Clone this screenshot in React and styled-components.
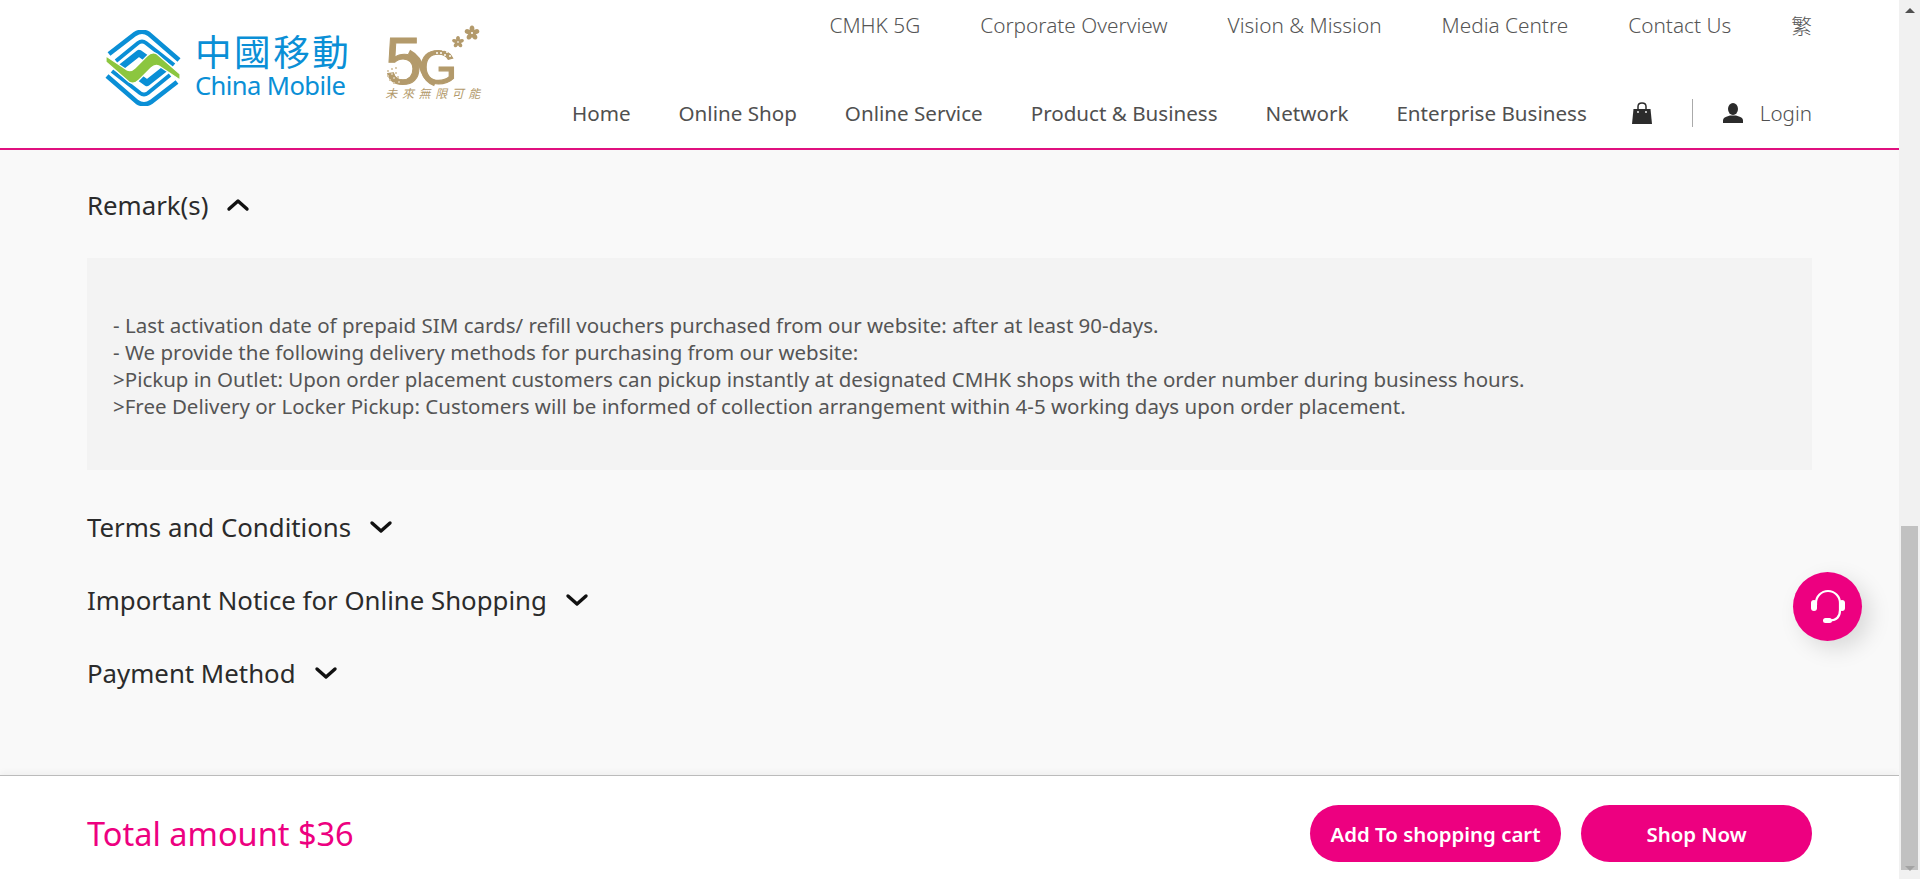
import React from 'react';
import styled, { createGlobalStyle } from 'styled-components'

const pink = '#ed0080'
const gold = '#b39a6b'
const font = `"Noto Sans", "Noto Sans CJK TC", sans-serif`

const Global = createGlobalStyle`
html, body { margin:0; padding:0; height:100%; overflow:hidden; background:#fff; }
* { box-sizing:border-box; }
`

const Shell = styled.div`
position:relative;
display:grid;
grid-template-columns:1fr 21px;
width:100%;
height:879px;
overflow:hidden;
font-family:${font};
`

const Page = styled.div`
display:flex;
flex-direction:column;
min-width:0;
height:879px;
`

const Header = styled.header`
flex:none;
height:150px;
display:flex;
justify-content:space-between;
background:#fff;
border-bottom:2px solid #e0107f;
padding:0 87px 0 105px;
`

const LogoBox = styled.div`
display:flex;
align-items:flex-start;
padding-top:30px;
`

const LogoWords = styled.div`
display:flex;
flex-direction:column;
margin-left:14px;
color:#0a8fd6;
`

const LogoCn = styled.div`
font-family:"Noto Sans CJK TC", sans-serif;
font-size:36.6px;
line-height:42px;
letter-spacing:2.5px;
white-space:nowrap;
`

const LogoEn = styled.div`
font-size:25.6px;
line-height:27px;
letter-spacing:-.6px;
white-space:nowrap;
`

const FiveG = styled.div`
display:flex;
flex-direction:column;
margin-left:34px;
margin-top:-5px;
`

const FiveGCaption = styled.div`
font-family:"Noto Sans CJK TC", sans-serif;
font-size:12px;
line-height:15px;
letter-spacing:4.6px;
font-style:italic;
color:${gold};
white-space:nowrap;
margin-top:-14px;
`

const NavColumn = styled.div`
display:flex;
flex-direction:column;
align-items:flex-end;
`

const TopNav = styled.nav`
display:flex;
align-items:center;
gap:60px;
height:50px;
font-size:20.8px;
font-weight:300;
color:#555;
`

const MainNav = styled.nav`
display:flex;
align-items:center;
gap:48px;
height:50px;
margin-top:38px;
font-size:20.6px;
color:#505050;
`

const NavLink = styled.a`
white-space:nowrap;
cursor:pointer;
`

const BagSlot = styled.div`
display:flex;
margin-left:-3px;
`

const UserBox = styled.div`
display:flex;
align-items:center;
height:28px;
padding-left:30px;
border-left:1px solid #aaa;
margin-left:-8px;
gap:17px;
font-weight:300;
`

const Content = styled.main`
flex:1;
min-height:0;
background:#f9f9f9;
padding:38px 87px 0;
`

const AccordionTitle = styled.div`
display:flex;
align-items:center;
gap:18px;
height:34px;
margin-bottom:${(props) => props.open ? '36px' : '39px'};
font-size:25.8px;
color:#2b2b2b;
cursor:pointer;
`

const RemarkPanel = styled.div`
background:#f3f3f3;
padding:54px 26px 50px;
margin-bottom:40px;
font-size:20.5px;
line-height:27px;
color:#555;
`

const Footer = styled.footer`
flex:none;
height:104px;
display:flex;
align-items:center;
justify-content:space-between;
background:#fff;
border-top:1px solid #bbb;
box-shadow:0 -3px 6px rgba(0,0,0,.04);
padding:12px 87px 0;
`

const Total = styled.div`
font-size:32.5px;
color:${pink};
`

const Actions = styled.div`
display:flex;
gap:20px;
`

const CartButton = styled.button`
width:${(props) => props.wide ? '251px' : '231px'};
height:57px;
border:none;
border-radius:29px;
background:${pink};
color:#fff;
font-family:${font};
font-size:20.4px;
font-weight:600;
cursor:pointer;
`

const Fab = styled.div`
position:absolute;
left:1793px;
top:572px;
width:69px;
height:69px;
border-radius:50%;
background:${pink};
box-shadow:8px 8px 22px rgba(0,0,0,.13);
display:flex;
align-items:center;
justify-content:center;
`

const Scrollbar = styled.div`
display:flex;
flex-direction:column;
align-items:center;
background:#f1f1f1;
height:879px;
position:relative;
`

const Arrow = styled.div`
flex:none;
height:21px;
width:100%;
display:flex;
align-items:center;
justify-content:center;
&::after {
  content:'';
  border-left:5px solid transparent;
  border-right:5px solid transparent;
  ${(props) => props.up ? 'border-bottom:5px solid #505050;' : 'border-top:5px solid #a3a3a3;'}
}
`

const Thumb = styled.div`
flex:none;
width:17px;
height:344px;
margin-top:505px;
margin-bottom:-12px;
background:#c1c1c1;
`

const Chevron = ({ up }) => (
  <svg width="24" height="16" viewBox="0 0 24 16" fill="none" stroke="#111" strokeWidth="3.4" strokeLinecap="round" strokeLinejoin="round">
    <path d={up ? 'M3 12 L12 4 L21 12' : 'M3 4 L12 12 L21 4'} />
  </svg>
)

// top half of the mark, the bottom is the same turned 180deg
const BandsHalf = () => (
  <g fill="none" stroke="#0a8fd6">
    <path d="M4 24 L30 4 Q37 -.5 44 4 L74 30" strokeWidth="4.6" />
    <path d="M11 31 L33 13 Q37 10 41 13 L69 35" strokeWidth="4" />
    <path d="M15 38 L34 23 L41 28" strokeWidth="6.5" strokeLinejoin="round" />
  </g>
)

const MobileMark = () => (
  <svg width="76" height="76" viewBox="0 0 76 76">
    <BandsHalf />
    <g transform="rotate(180 38 38)">
      <BandsHalf />
    </g>
    <path
      d="M1 26 L22 40 Q26 42 30 38 L42 26 Q47 21 52 24 L75 44 L75 50 L54 36 Q50 34 46 38 L34 50 Q29 55 24 52 L1 32 Z"
      fill="#8cc63f"
      stroke="#fff"
      strokeWidth="1.2"
    />
  </svg>
)

const leftDots = [[3,46],[7,44],[11,43],[3,51],[7,49],[11,48],[5,55],[9,53],[13,52],[9,58],[14,57]]
const rightDots = [[50,24],[54,24],[58,25],[62,27],[52,28],[56,28],[60,30],[65,31]]
const petals = [0, 72, 144, 216, 288]

const Flower = ({ x, y, s }) => (
  <g transform={`translate(${x} ${y}) scale(${s})`} fill={gold}>
    {petals.map((a) => <ellipse key={a} cx="0" cy="-4" rx="2.4" ry="3.6" transform={`rotate(${a})`} />)}
    <circle r="1" fill="#fff" />
  </g>
)

const FiveGMark = () => (
  <svg width="98" height="74" viewBox="0 0 98 74">
    <text x="0" y="59" fontFamily="Liberation Sans, sans-serif" fontSize="66" fill={gold} stroke={gold} strokeWidth="1">5</text>
    <text x="34" y="59" fontFamily="Liberation Sans, sans-serif" fontSize="49" fill={gold} stroke={gold} strokeWidth="1.2">G</text>
    <path d="M24 27 Q34 32 38 46 Q42 56 50 59" fill="none" stroke={gold} strokeWidth="5" />
    {[...leftDots, ...rightDots].map(([x, y]) => <circle key={x + '-' + y} cx={x} cy={y} r="1" fill="#fff" />)}
    {leftDots.map(([x, y]) => <circle key={x + '_' + y} cx={x} cy={y} r=".9" fill="#c9b48d" />)}
    <Flower x={87} y={8} s={1} />
    <Flower x={73} y={17} s={.8} />
  </svg>
)

const BagIcon = () => (
  <svg width="20" height="22" viewBox="0 0 20 22">
    <path d="M1.5 7 H18.5 L20 22 H0 Z" fill="#2b2b2b" />
    <path d="M6 10 V4.5 Q6 1 10 1 Q14 1 14 4.5 V10" fill="none" stroke="#2b2b2b" strokeWidth="1.5" />
    <circle cx="6" cy="10" r=".9" fill="#fff" />
    <circle cx="14" cy="10" r=".9" fill="#fff" />
  </svg>
)

const UserIcon = () => (
  <svg width="20" height="20" viewBox="0 0 20 20" fill="#2b2b2b">
    <ellipse cx="10" cy="6" rx="5" ry="6" />
    <path d="M0 20 V17.5 Q0 14.5 4 13.5 L7 12.5 H13 L16 13.5 Q20 14.5 20 17.5 V20 Z" />
  </svg>
)

const HeadsetIcon = () => (
  <svg width="38" height="38" viewBox="0 0 38 38" fill="none" stroke="#fff">
    <path d="M7 17 V15 A12 12 0 0 1 31 15 V22 Q31 32 21 32.5" strokeWidth="2.2" />
    <rect x="2" y="12" width="6" height="11" rx="3" fill="#fff" stroke="none" />
    <rect x="30" y="12" width="6" height="11" rx="3" fill="#fff" stroke="none" />
    <rect x="14" y="30" width="9" height="5" rx="2.5" fill="#fff" stroke="none" />
  </svg>
)

const topLinks = ['CMHK 5G', 'Corporate Overview', 'Vision & Mission', 'Media Centre', 'Contact Us', '繁']
const mainLinks = ['Home', 'Online Shop', 'Online Service', 'Product & Business', 'Network', 'Enterprise Business']
const collapsed = ['Terms and Conditions', 'Important Notice for Online Shopping', 'Payment Method']

const App = () => {
  return (
    <Shell>
      <Global />
      <Page>
        <Header>
          <LogoBox>
            <MobileMark />
            <LogoWords>
              <LogoCn>中國移動</LogoCn>
              <LogoEn>China Mobile</LogoEn>
            </LogoWords>
            <FiveG>
              <FiveGMark />
              <FiveGCaption>未來無限可能</FiveGCaption>
            </FiveG>
          </LogoBox>
          <NavColumn>
            <TopNav>
              {topLinks.map((l) => <NavLink key={l}>{l}</NavLink>)}
            </TopNav>
            <MainNav>
              {mainLinks.map((l) => <NavLink key={l}>{l}</NavLink>)}
              <BagSlot><BagIcon /></BagSlot>
              <UserBox>
                <UserIcon />
                <NavLink>Login</NavLink>
              </UserBox>
            </MainNav>
          </NavColumn>
        </Header>
        <Content>
          <AccordionTitle open>Remark(s) <Chevron up /></AccordionTitle>
          <RemarkPanel>
            - Last activation date of prepaid SIM cards/ refill vouchers purchased from our website: after at least 90-days.<br />
            - We provide the following delivery methods for purchasing from our website:<br />
            &gt;Pickup in Outlet: Upon order placement customers can pickup instantly at designated CMHK shops with the order number during business hours.<br />
            &gt;Free Delivery or Locker Pickup: Customers will be informed of collection arrangement within 4-5 working days upon order placement.
          </RemarkPanel>
          {collapsed.map((t) => <AccordionTitle key={t}>{t} <Chevron /></AccordionTitle>)}
        </Content>
        <Footer>
          <Total>Total amount $36</Total>
          <Actions>
            <CartButton wide>Add To shopping cart</CartButton>
            <CartButton>Shop Now</CartButton>
          </Actions>
        </Footer>
      </Page>
      <Scrollbar>
        <Arrow up />
        <Thumb />
        <Arrow />
      </Scrollbar>
      <Fab><HeadsetIcon /></Fab>
    </Shell>
  )
}

export default App
